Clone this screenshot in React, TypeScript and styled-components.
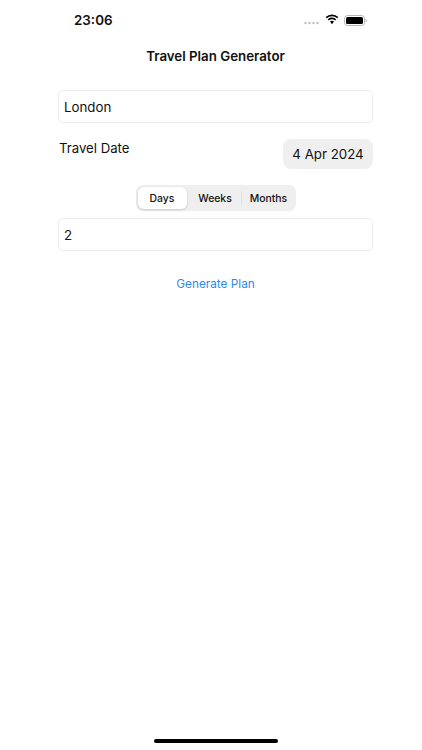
import React, { useState } from "react";
import styled, { createGlobalStyle } from "styled-components";

const GlobalStyle = createGlobalStyle`
  html, body {
    margin: 0;
    padding: 0;
    background: #ffffff;
  }
  body {
    font-family: Inter, "Liberation Sans", sans-serif;
    color: #111111;
  }
`;

const Screen = styled.div`
  display: flex;
  flex-direction: column;
  width: 422px;
  height: 750px;
  overflow: hidden;
  background: #ffffff;
`;

const StatusBar = styled.div`
  display: flex;
  align-items: center;
  justify-content: space-between;
  height: 40px;
  padding: 0 55px 0 74px;
`;

const Clock = styled.span`
  font-size: 13.4px;
  font-weight: 600;
  color: #111111;
`;

const StatusIcons = styled.div`
  display: flex;
  align-items: center;
  gap: 5px;
`;

const NavTitle = styled.h1`
  margin: 0;
  height: 32px;
  padding-left: 9px;
  font-size: 13.3px;
  line-height: 32px;
  font-weight: 600;
  text-align: center;
  color: #111111;
`;

const Form = styled.div`
  display: flex;
  flex-direction: column;
  padding: 18px 49px 0 58px;
`;

const TextField = styled.input`
  box-sizing: border-box;
  width: 100%;
  height: 33px;
  padding: 0 5px;
  border: 1px solid #ececee;
  border-radius: 5px;
  outline: none;
  background: #ffffff;
  font-family: inherit;
  font-size: 13.3px;
  color: #111111;
`;

const DateRow = styled.div`
  display: flex;
  align-items: flex-start;
  justify-content: space-between;
  margin-top: 16px;
`;

const DateLabel = styled.span`
  padding-left: 1px;
  font-size: 13.2px;
  line-height: 18px;
  color: #111111;
`;

const DatePill = styled.button`
  width: 90px;
  height: 30px;
  padding: 0;
  border: none;
  border-radius: 8px;
  background: #efeff0;
  font-family: inherit;
  font-size: 13.3px;
  color: #111111;
`;

const Segmented = styled.div`
  display: flex;
  align-self: center;
  align-items: stretch;
  box-sizing: border-box;
  width: 160px;
  height: 26px;
  margin: 16px 0 7px;
  padding: 2px;
  border-radius: 7px;
  background: #efeff0;
`;

const Segment = styled.button<{ $active?: boolean; $width: number; $inset?: number }>`
  width: ${(p) => p.$width}px;
  padding: 0 0 0 ${(p) => p.$inset ?? 0}px;
  border: none;
  border-radius: 6px;
  background: ${(p) => (p.$active ? "#ffffff" : "transparent")};
  box-shadow: ${(p) => (p.$active ? "0 1px 3px rgba(0, 0, 0, 0.16)" : "none")};
  font-family: inherit;
  font-size: 10.4px;
  font-weight: 500;
  color: #111111;
`;

const SegmentDivider = styled.span`
  align-self: center;
  width: 1px;
  height: 14px;
  background: #dfdfe1;
`;

const GenerateButton = styled.button`
  align-self: center;
  margin: 23px 0 0;
  padding: 0;
  border: none;
  background: none;
  font-family: inherit;
  font-size: 11.8px;
  line-height: 20px;
  color: #2f8ae6;
`;

const HomeArea = styled.div`
  display: flex;
  align-items: flex-end;
  justify-content: center;
  margin-top: auto;
  padding: 0 0 7px 9px;
`;

const HomeBar = styled.div`
  width: 124px;
  height: 4px;
  border-radius: 2px;
  background: #000000;
`;

const SignalDots = () => (
  <svg width="16" height="4" viewBox="0 0 16 4" style={{ marginTop: 6 }}>
    {[1.5, 5.5, 9.5, 13.5].map((x) => (
      <circle key={x} cx={x} cy="2" r="1.3" fill="#c4c4c6" />
    ))}
  </svg>
);

const WifiIcon = () => (
  <svg width="14" height="11" viewBox="0 0 14 11" style={{ marginTop: -2 }}>
    <path
      d="M7 2.2c2 0 3.8.8 5.2 2.1l1.1-1.2A9.2 9.2 0 0 0 7 .5 9.2 9.2 0 0 0 .7 3.1l1.1 1.2A7.6 7.6 0 0 1 7 2.2Z"
      fill="#000"
    />
    <path
      d="M7 5.2c1.2 0 2.2.4 3.1 1.2l1.1-1.2A6.1 6.1 0 0 0 7 3.6c-1.6 0-3 .6-4.2 1.6l1.1 1.2c.9-.8 1.9-1.2 3.1-1.2Z"
      fill="#000"
    />
    <path d="M7 6.8c-.8 0-1.5.3-2 .8L7 10.3l2-2.7c-.5-.5-1.2-.8-2-.8Z" fill="#000" />
  </svg>
);

const BatteryIcon = () => (
  <svg width="23" height="11" viewBox="0 0 23 11">
    <rect x="0.5" y="0.5" width="20" height="10" rx="3" fill="none" stroke="#b5b5b7" />
    <rect x="2" y="2" width="17" height="7" rx="1.6" fill="#000" />
    <path d="M21.6 3.8c.7.2 1.2.9 1.2 1.7s-.5 1.5-1.2 1.7Z" fill="#b5b5b7" />
  </svg>
);

const App = () => {
  const [city, setCity] = useState("London");
  const [amount, setAmount] = useState("2");

  return (
    <Screen>
      <GlobalStyle />
      <StatusBar>
        <Clock>23:06</Clock>
        <StatusIcons>
          <SignalDots />
          <WifiIcon />
          <BatteryIcon />
        </StatusIcons>
      </StatusBar>
      <NavTitle>Travel Plan Generator</NavTitle>
      <Form>
        <TextField value={city} onChange={(e) => setCity(e.target.value)} />
        <DateRow>
          <DateLabel>Travel Date</DateLabel>
          <DatePill>4 Apr 2024</DatePill>
        </DateRow>
        <Segmented>
          <Segment $active $width={49}>Days</Segment>
          <Segment $width={54} $inset={3}>Weeks</Segment>
          <SegmentDivider />
          <Segment $width={52} $inset={2}>Months</Segment>
        </Segmented>
        <TextField value={amount} onChange={(e) => setAmount(e.target.value)} />
        <GenerateButton>Generate Plan</GenerateButton>
      </Form>
      <HomeArea>
        <HomeBar />
      </HomeArea>
    </Screen>
  );
};

export default App;
